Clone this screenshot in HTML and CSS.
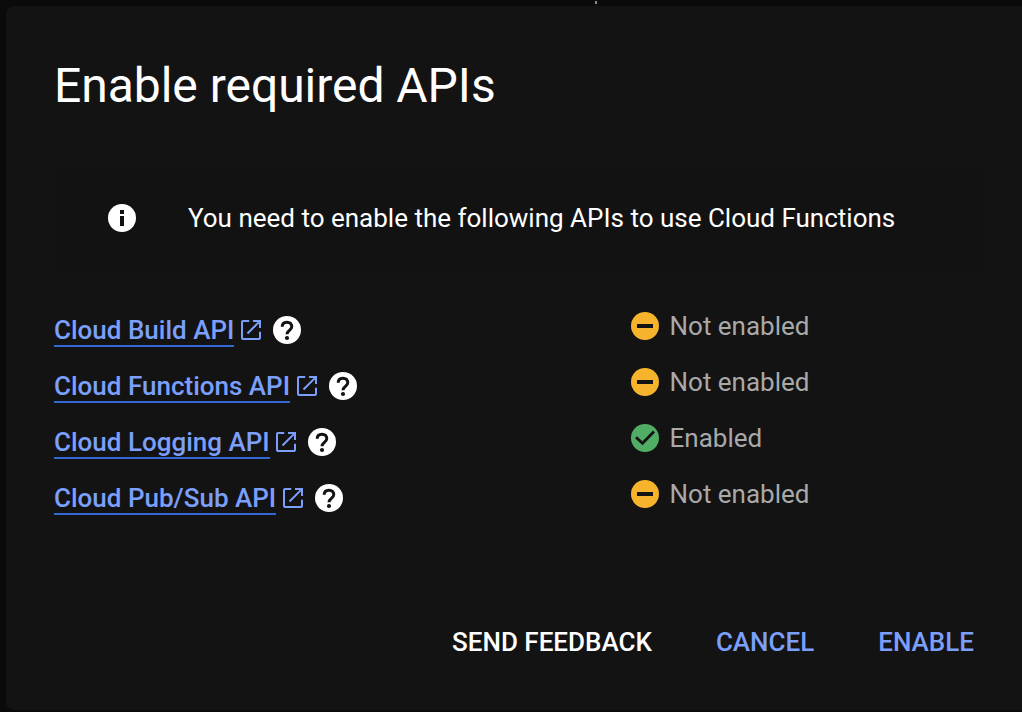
FILE: index.html
```html
<!DOCTYPE html>
<html lang="en">
<head>
<meta charset="utf-8">
<title>Enable required APIs</title>
<link rel="stylesheet" href="styles.css">
</head>
<body>
<svg class="sprite" aria-hidden="true">
  <symbol id="launch" viewBox="0 0 20 20"><path d="M8.2 1H2Q1 1 1 2v16q0 1 1 1h16q1 0 1-1v-6.2M12 1h7v7M18.6 1.4 6.5 13.5" fill="none" stroke="currentColor" stroke-width="2"/></symbol>
  <symbol id="help" viewBox="0 0 28 28"><circle cx="14" cy="14" r="14" fill="#fff"/><path d="M9.2 10.8C9.2 8 11.1 6.2 14 6.2s4.8 1.8 4.8 4.4c0 3.7-4.8 3.9-4.8 7.6" fill="none" stroke="#131313" stroke-width="3"/><circle cx="14" cy="22" r="2.1" fill="#131313"/></symbol>
  <symbol id="minus" viewBox="0 0 28 28"><circle cx="14" cy="14" r="14" fill="#f5b42b"/><path d="M6 12h16v4H6z" fill="#131313"/></symbol>
  <symbol id="check" viewBox="0 0 28 28"><circle cx="14" cy="14" r="14" fill="#52ad64"/><path d="M5 13.2l6.5 6L23 7.6" fill="none" stroke="#131313" stroke-width="2.8"/></symbol>
</svg>
<span class="speck"></span>
<main class="dialog">
  <h1 class="title">Enable required APIs</h1>
  <div class="notice">
    <svg class="badge" viewBox="0 0 28 28"><circle cx="14" cy="14" r="14" fill="#fff"/><path d="M12 6h4v4h-4zM12 12h4v10h-4z" fill="#111"/></svg>
    <span class="notice-text">You need to enable the following APIs to use Cloud Functions</span>
  </div>
  <ul class="apis">
    <li class="api"><div class="name"><a class="link">Cloud Build API</a><svg class="launch"><use href="#launch"/></svg><svg class="badge"><use href="#help"/></svg></div><div class="status"><svg class="badge"><use href="#minus"/></svg><span>Not enabled</span></div></li>
    <li class="api"><div class="name"><a class="link">Cloud Functions API</a><svg class="launch"><use href="#launch"/></svg><svg class="badge"><use href="#help"/></svg></div><div class="status"><svg class="badge"><use href="#minus"/></svg><span>Not enabled</span></div></li>
    <li class="api"><div class="name"><a class="link">Cloud Logging API</a><svg class="launch"><use href="#launch"/></svg><svg class="badge"><use href="#help"/></svg></div><div class="status"><svg class="badge"><use href="#check"/></svg><span>Enabled</span></div></li>
    <li class="api"><div class="name"><a class="link">Cloud Pub/Sub API</a><svg class="launch"><use href="#launch"/></svg><svg class="badge"><use href="#help"/></svg></div><div class="status"><svg class="badge"><use href="#minus"/></svg><span>Not enabled</span></div></li>
  </ul>
  <div class="actions">
    <button class="action action-plain">SEND FEEDBACK</button>
    <button class="action">CANCEL</button>
    <button class="action">ENABLE</button>
  </div>
</main>
</body>
</html>
```
FILE: styles.css
```css
* { box-sizing: border-box; }
body {
  margin: 0;
  height: 712px;
  padding: 6px 0 2px 6px;
  overflow: hidden;
  background: #0a0a0a;
  font-family: Roboto, sans-serif;
  font-size: 26px;
  line-height: 32px;
}
.sprite { position: absolute; width: 0; height: 0; }
.speck { position: absolute; left: 595px; top: 1px; width: 2px; height: 3px; background: #888; }
.dialog {
  height: 704px;
  padding: 48px 40px 0 48px;
  border-radius: 8px 0 0 8px;
  background: #131313;
  color: #fff;
}
.title { margin: 0; font-size: 48px; font-weight: 400; line-height: 64px; letter-spacing: -.03px; }
.notice {
  display: flex;
  align-items: center;
  gap: 52px;
  height: 102px;
  margin-top: 49px;
  padding-left: 54px;
  border-radius: 4px;
  background: #121212;
}
.notice-text { white-space: nowrap; }
.badge { flex: none; width: 28px; height: 28px; }
.apis { list-style: none; margin: 33px 0 0; padding: 0; }
.api { display: grid; grid-template-columns: 577px 1fr; height: 56px; }
.name, .status { display: flex; align-items: flex-start; }
.name { padding-top: 12px; }
.name .badge { margin: 2px 0 0 12px; }
.link {
  height: 33px;
  border-bottom: 2px solid #3367d6;
  color: #7b9ffb;
  font-weight: 500;
}
.launch { flex: none; width: 20px; height: 20px; margin: 6px 0 0 6.5px; color: #7b9ffb; }
.status { gap: 10.5px; padding-top: 8px; color: #a9a9a9; }
.status .badge { margin-top: 2px; }
.actions { display: flex; justify-content: flex-end; gap: 64px; margin-top: 100px; padding-right: 8px; }
.action { padding: 0; border: 0; background: none; color: #7b9ffb; font: 500 26px/32px Roboto, sans-serif; }
.action-plain { color: #fff; }
```
